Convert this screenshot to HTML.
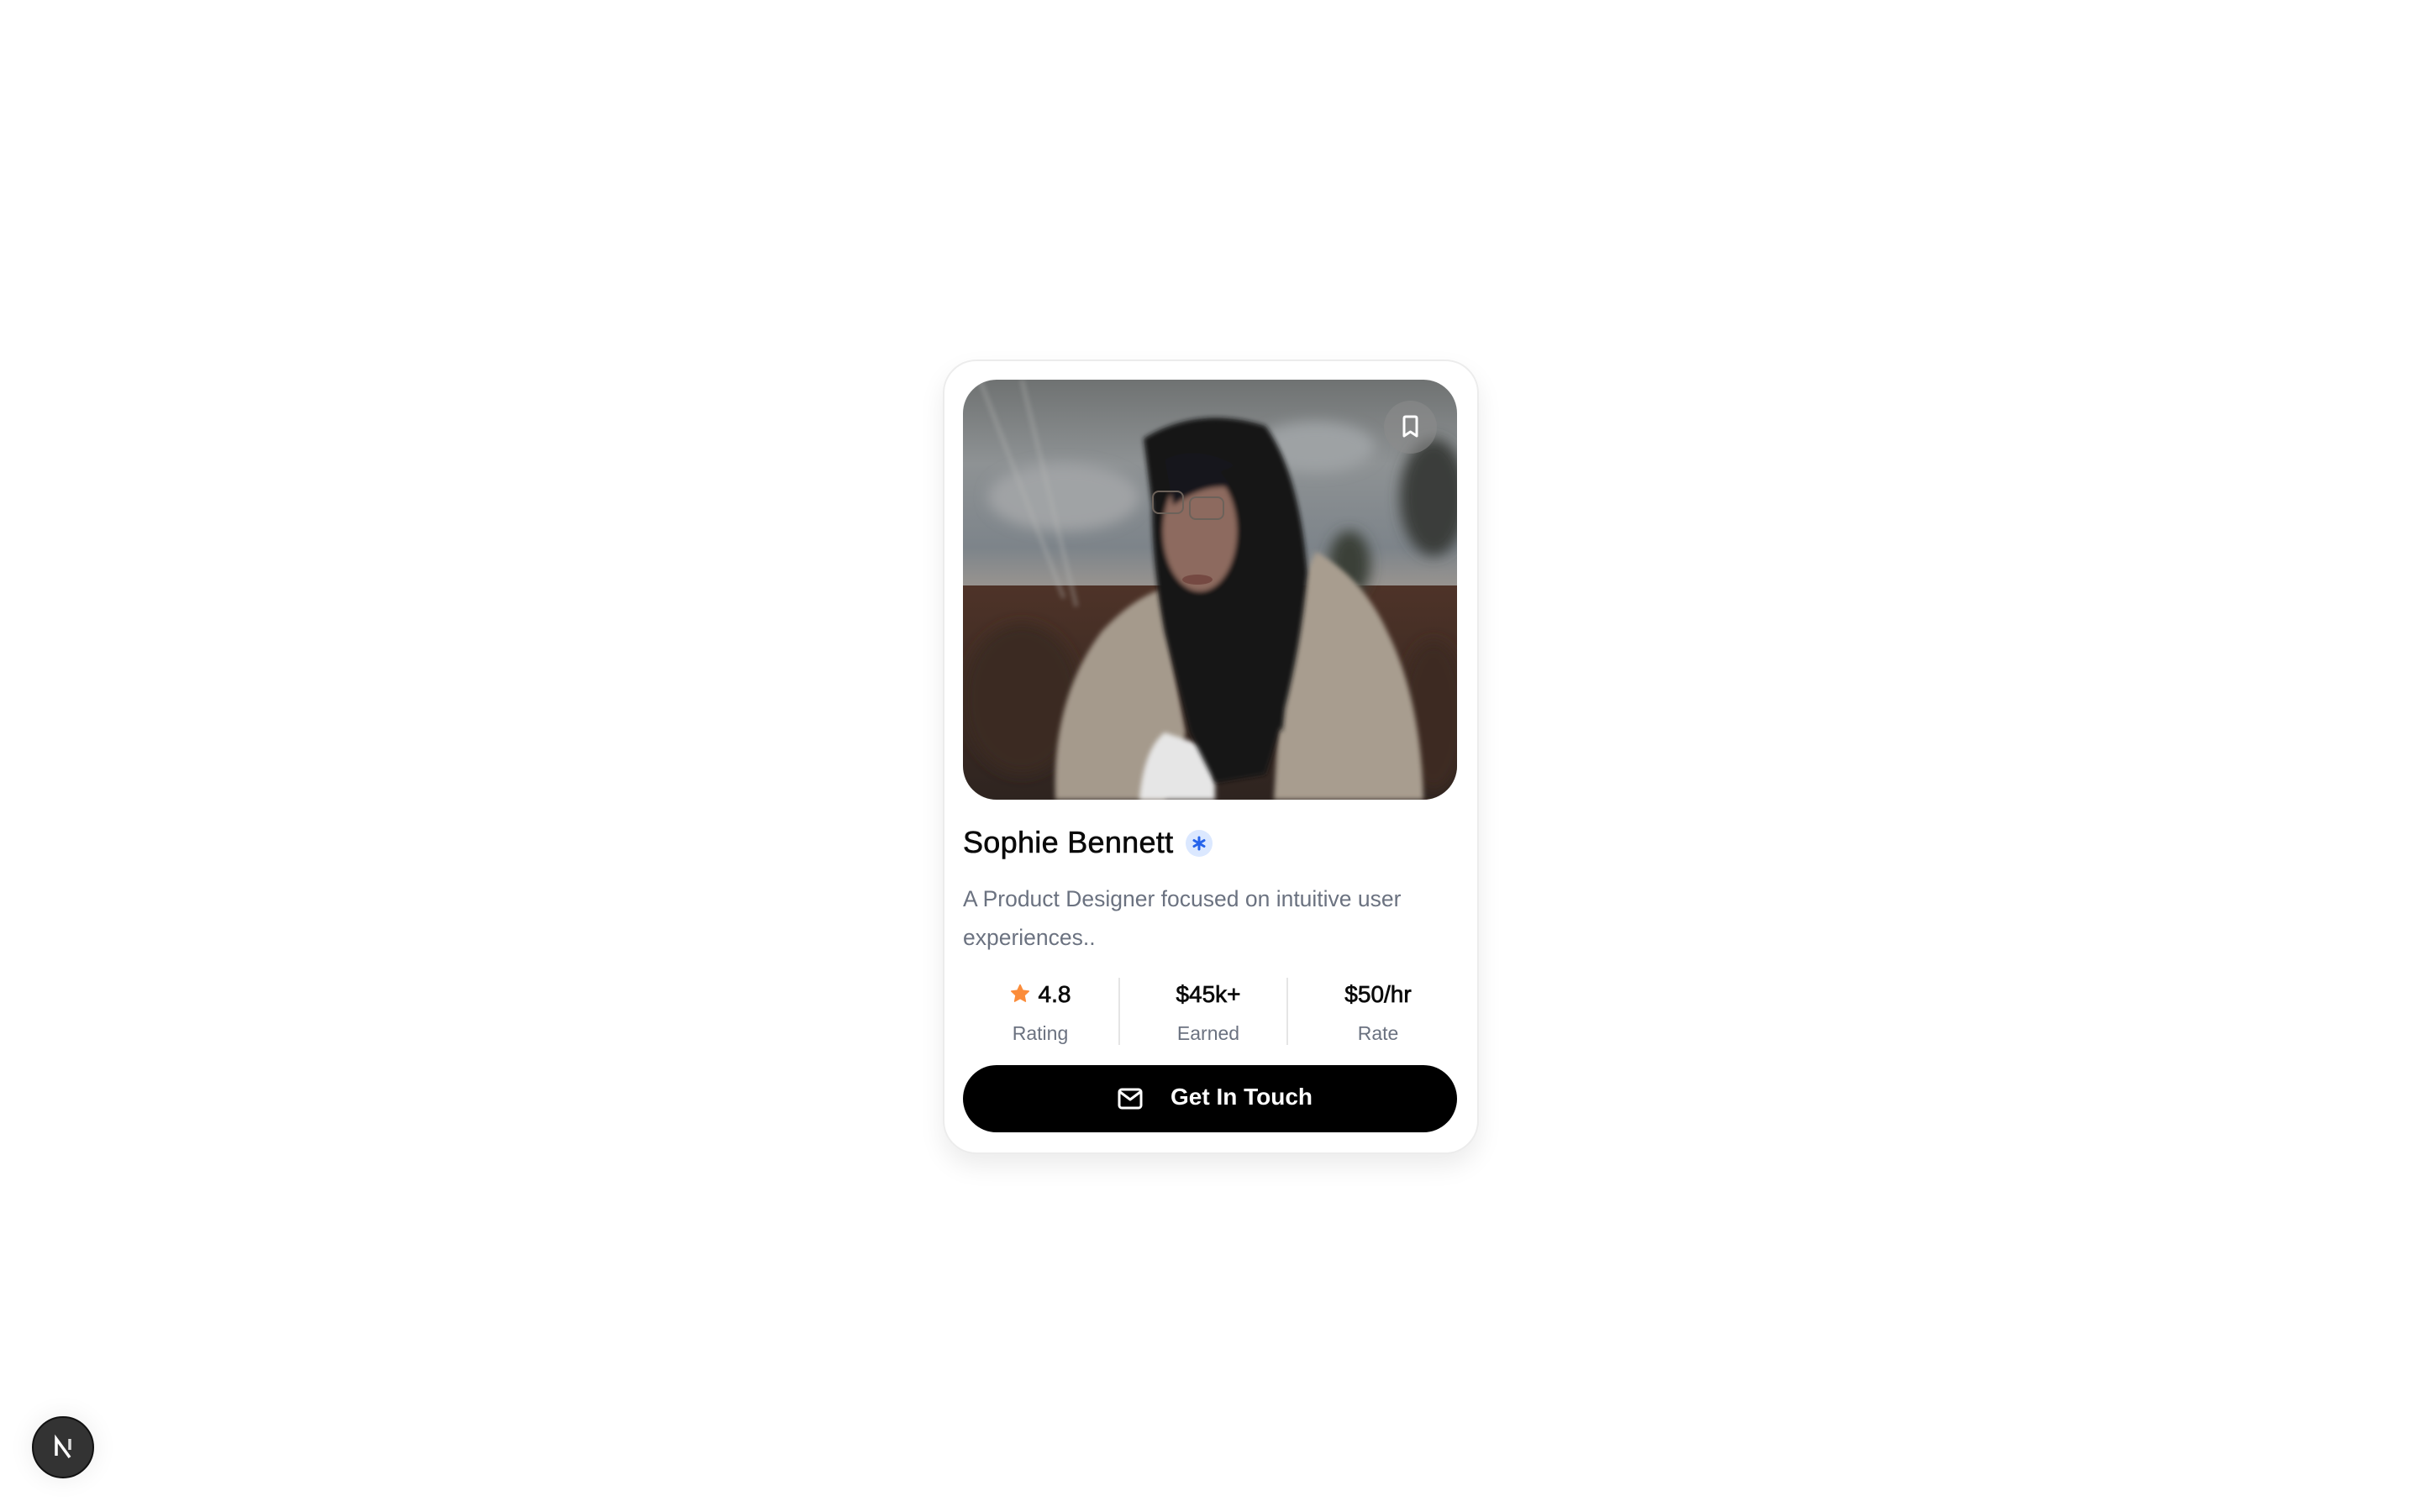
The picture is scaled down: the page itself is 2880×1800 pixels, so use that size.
<!DOCTYPE html>
<html><head><meta charset="utf-8"><style>
html,body{margin:0;padding:0;background:#fff;width:2880px;height:1800px;overflow:hidden;font-family:"Liberation Sans",sans-serif}
.card{position:absolute;left:1122px;top:428px;width:634px;height:942px;border:2px solid #ececec;border-radius:40px;box-shadow:0 14px 30px rgba(0,0,0,0.08);background:#fff}
.photo{position:absolute;left:1146px;top:452px;width:588px;height:500px;border-radius:40px;overflow:hidden}
.bm{position:absolute;left:1647px;top:477px;width:63px;height:63px;border-radius:50%;background:rgba(140,140,140,0.55)}
.name{position:absolute;left:1146px;top:982px;font-size:36px;color:#0a0a0a;white-space:nowrap;-webkit-text-stroke:0.6px #0a0a0a;letter-spacing:0.3px}
.badge{position:absolute;left:1411px;top:988px;width:32px;height:32px;border-radius:50%;background:#dbe8ff}
.desc{position:absolute;left:1146px;top:1047px;width:588px;font-size:26.5px;line-height:46px;color:#6b7280}
.stat{position:absolute;top:1166px;width:180px;text-align:center}
.v{font-size:28px;color:#0a0a0a;line-height:36px;-webkit-text-stroke:0.7px #0a0a0a}
.l{font-size:23px;color:#6b7280;line-height:36px;margin-top:10px}
.div{position:absolute;top:1164px;width:2px;height:80px;background:#e5e5e5}
.btn{position:absolute;left:1146px;top:1268px;width:588px;height:80px;border-radius:40px;background:#000;color:#fff}
.btn span{position:absolute;left:247px;top:22px;font-size:28px;font-weight:600;white-space:nowrap}
.n{position:absolute;left:38px;top:1686px;width:74px;height:74px;border-radius:50%;background:#333;border:2px solid #111;box-shadow:0 0 30px rgba(0,0,0,0.08);box-sizing:border-box}
</style></head><body>
<div class="card"></div>
<div class="photo">
<svg width="588" height="500" viewBox="0 0 588 500">
<defs>
<filter id="b" x="-20%" y="-20%" width="140%" height="140%"><feGaussianBlur stdDeviation="8"/></filter>
<filter id="b2"><feGaussianBlur stdDeviation="3"/></filter>
<linearGradient id="sky" x1="0" y1="0" x2="0" y2="1">
<stop offset="0" stop-color="#6f7272"/><stop offset="0.4" stop-color="#8e9294"/><stop offset="0.8" stop-color="#7d848a"/><stop offset="1" stop-color="#9a9590"/></linearGradient>
<linearGradient id="fld" x1="0" y1="0" x2="0" y2="1">
<stop offset="0" stop-color="#4e3328"/><stop offset="1" stop-color="#2e2420"/></linearGradient>
</defs>
<rect width="588" height="250" fill="url(#sky)"/>
<rect y="245" width="588" height="255" fill="url(#fld)"/>
<g filter="url(#b)">
<ellipse cx="120" cy="140" rx="90" ry="40" fill="#a0a3a5"/>
<ellipse cx="420" cy="80" rx="70" ry="30" fill="#9ea2a4"/>
<ellipse cx="560" cy="140" rx="40" ry="70" fill="#3a3d3a"/>
<ellipse cx="70" cy="380" rx="70" ry="90" fill="#3a2a22"/>
<ellipse cx="560" cy="400" rx="40" ry="90" fill="#3d2a22"/>
<ellipse cx="460" cy="220" rx="25" ry="40" fill="#3a4038"/>
</g>
<path d="M110 500 Q105 380 165 300 Q200 262 235 250 L265 420 L240 500Z" fill="#a59a8c" filter="url(#b2)"/>
<path d="M370 500 L380 330 Q400 250 420 205 Q475 235 505 300 Q545 380 548 500Z" fill="#a89d8f" filter="url(#b2)"/>
<path d="M210 500 Q215 440 240 420 L300 440 L300 500Z" fill="#e6e6e6" filter="url(#b2)"/>
<g filter="url(#b2)">
<path d="M215 70 Q280 30 360 55 Q400 110 410 230 Q400 350 360 470 L300 480 L270 420 L240 300 Q225 220 225 150 Z" fill="#121416"/>
<ellipse cx="282" cy="180" rx="44" ry="72" fill="#8d6b5e"/>
<path d="M240 95 Q280 75 330 105 L330 130 Q290 120 250 150Z" fill="#16181a"/>
<path d="M305 110 Q345 140 325 300 L380 420 L400 230 Q395 130 360 90Z" fill="#121416"/>
</g>
<ellipse cx="279" cy="238" rx="18" ry="6" fill="#6b3c36" opacity="0.7"/>
<g fill="none" stroke="#6c625a" stroke-width="2">
<rect x="226" y="133" width="36" height="26" rx="7"/>
<rect x="270" y="140" width="40" height="26" rx="7"/>
</g>
<g stroke="#b7b8b6" stroke-width="5" opacity="0.35" filter="url(#b2)">
<line x1="20" y1="0" x2="120" y2="260"/><line x1="70" y1="0" x2="135" y2="270"/>
</g>
</svg>
</div>
<div class="bm"><svg width="63" height="63" viewBox="0 0 63 63"><path d="M24 21 Q24 19 26 19 H37 Q39 19 39 21 V42 L31.5 37 L24 42 Z" fill="none" stroke="#fff" stroke-width="3" stroke-linejoin="round"/></svg></div>
<div class="name">Sophie Bennett</div>
<div class="badge"><svg width="32" height="32" viewBox="0 0 32 32"><g stroke="#2563eb" stroke-width="3" stroke-linecap="round"><line x1="16" y1="9" x2="16" y2="23"/><line x1="10" y1="12.5" x2="22" y2="19.5"/><line x1="10" y1="19.5" x2="22" y2="12.5"/></g></svg></div>
<div class="desc">A Product Designer focused on intuitive user experiences..</div>
<div class="stat" style="left:1148px"><div class="v"><svg width="24" height="24" viewBox="0 0 24 24" style="vertical-align:-2px;margin-right:10px"><path d="M12 1.5l3.1 6.6 7.2.9-5.3 5 1.4 7.1L12 17.6 5.6 21.1 7 14l-5.3-5 7.2-.9z" fill="#fb8c3a" stroke="#fb8c3a" stroke-width="1.5" stroke-linejoin="round"/></svg>4.8</div><div class="l">Rating</div></div>
<div class="div" style="left:1331px"></div>
<div class="stat" style="left:1348px"><div class="v">$45k+</div><div class="l">Earned</div></div>
<div class="div" style="left:1531px"></div>
<div class="stat" style="left:1550px"><div class="v">$50/hr</div><div class="l">Rate</div></div>
<div class="btn"><svg style="position:absolute;left:184px;top:27px" width="30" height="26" viewBox="0 0 30 26"><rect x="2" y="2" width="26" height="22" rx="3" fill="none" stroke="#fff" stroke-width="3"/><path d="M3 5 L15 14 L27 5" fill="none" stroke="#fff" stroke-width="3" stroke-linejoin="round"/></svg><span>Get In Touch</span></div>
<div class="n"><svg width="70" height="70" viewBox="0 0 70 70"><path d="M27 45 V25 L43 47" fill="none" stroke="#fff" stroke-width="3.5"/><line x1="43" y1="25" x2="43" y2="38" stroke="#ddd" stroke-width="3.5"/></svg></div>
</body></html>
